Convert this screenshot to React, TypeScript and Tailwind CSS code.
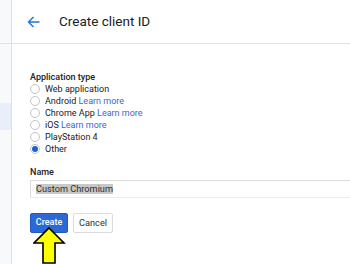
import React from "react";

const TYPES = [
  { label: "Web application", more: false, checked: false },
  { label: "Android", more: true, checked: false },
  { label: "Chrome App", more: true, checked: false },
  { label: "iOS", more: true, checked: false },
  { label: "PlayStation 4", more: false, checked: false },
  { label: "Other", more: false, checked: true },
];

function Radio({ checked }: { checked: boolean }) {
  return (
    <span className="w-[10px] h-[10px] rounded-full border border-[#c4c4c4] bg-white flex items-center justify-center shrink-0">
      {checked && <span className="w-[6px] h-[6px] rounded-full bg-[#1a5fd6]" />}
    </span>
  );
}

export default function App() {
  return (
    <div
      className="relative w-[350px] h-[264px] overflow-hidden bg-white flex text-[#202124]"
      style={{ fontFamily: "Roboto, 'Liberation Sans', sans-serif" }}
    >
      {/* left nav strip */}
      <div className="w-[12px] shrink-0 bg-[#f8f9fa] border-r border-[#e0e0e0] flex flex-col">
        <div className="h-[44px] border-b border-[#e0e0e0]" />
        <div className="h-[59px]" />
        <div className="h-[27px] bg-[#e8eefa]" />
      </div>

      <div className="flex-1 flex flex-col min-w-0">
        {/* header */}
        <div className="h-[44px] shrink-0 border-b border-[#e0e0e0] flex items-center pl-[15px]">
          <svg width="13" height="12" viewBox="0 0 13 12" className="mt-[1px]">
            <path d="M12.5 6H1.5M6.5 1L1.5 6l5 5" fill="none" stroke="#1a73e8" strokeWidth="1.4" />
          </svg>
          <span className="ml-[19px] text-[13.5px] leading-none">Create client ID</span>
        </div>

        {/* form */}
        <div className="pl-[18px] pt-[27px] flex flex-col">
          <div className="h-[12px] leading-[12px] text-[9px] font-medium">Application type</div>
          {TYPES.map((t) => (
            <div key={t.label} className="h-[12px] flex items-center gap-[5px] text-[9px] leading-[12px]">
              <Radio checked={t.checked} />
              <span>
                {t.label}
                {t.more && <span className="text-[#3b67d0]"> Learn more</span>}
              </span>
            </div>
          ))}

          <div className="mt-[11px] h-[12px] leading-[12px] text-[9px] font-medium">Name</div>
          <div className="mt-[2px] w-[340px] h-[18px] border border-[#dcdcdc] border-b-[#ececec] flex items-center pl-[5px]">
            <span className="bg-[#c8c8c8] text-[9.2px] leading-[10px] text-[#303030]">Custom Chromium</span>
          </div>

          <div className="mt-[15px] flex gap-[5px]">
            <button className="w-[38px] h-[20px] rounded-[2px] bg-[#2b69d6] border border-[#2458bb] text-white text-[9px] font-medium">
              Create
            </button>
            <button className="w-[40px] h-[20px] rounded-[2px] bg-white border border-[#dadce0] text-[#303030] text-[9.2px]">
              Cancel
            </button>
          </div>
        </div>
      </div>

      {/* annotation arrow */}
      <svg className="absolute left-[33px] top-[226px]" width="34" height="40" viewBox="0 0 34 40">
        <polygon
          points="16,2 31,17 22,17 22,37 10,37 10,17 1,17"
          fill="#ffff00"
          stroke="#000"
          strokeWidth="1.6"
          strokeLinejoin="miter"
        />
      </svg>
    </div>
  );
}
